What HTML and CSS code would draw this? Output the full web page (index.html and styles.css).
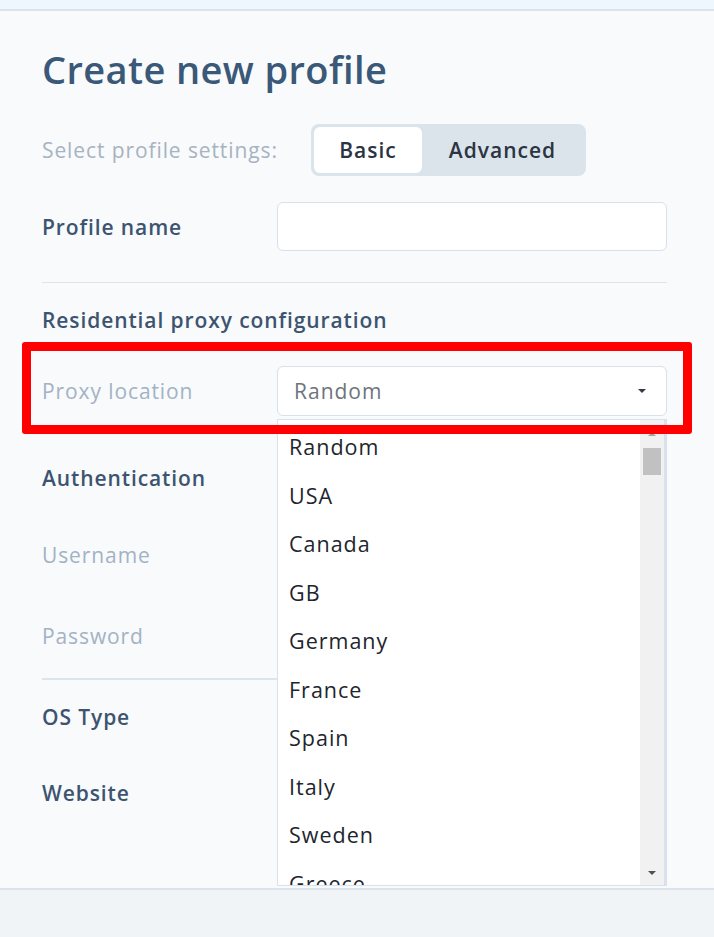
FILE: index.html
```html
<!DOCTYPE html>
<html lang="en">
<head>
<meta charset="utf-8">
<title>Create new profile</title>
<link rel="stylesheet" href="styles.css">
</head>
<body>
<div class="topbar"></div>
<main class="main">
  <h1 class="title">Create new profile</h1>

  <div class="row settings-row">
    <span class="label muted">Select profile settings:</span>
    <div class="toggle">
      <button class="seg active">Basic</button>
      <button class="seg">Advanced</button>
    </div>
  </div>

  <div class="row field-row name-row">
    <span class="label strong">Profile name</span>
    <div class="input"></div>
  </div>

  <hr class="divider">

  <h2 class="section">Residential proxy configuration</h2>

  <div class="row field-row proxy-row">
    <span class="highlight"></span>
    <span class="label muted">Proxy location</span>
    <div class="select">
      <span class="select-value">Random</span>
      <span class="caret"></span>
      <div class="dropdown">
        <ul class="options">
          <li>Random</li>
          <li>USA</li>
          <li>Canada</li>
          <li>GB</li>
          <li>Germany</li>
          <li>France</li>
          <li>Spain</li>
          <li>Italy</li>
          <li>Sweden</li>
          <li>Greece</li>
        </ul>
        <div class="scrollbar">
          <span class="arrow up"></span>
          <span class="thumb"></span>
          <span class="arrow down"></span>
        </div>
      </div>
    </div>
  </div>

  <h2 class="section auth">Authentication</h2>

  <div class="row field-row user-row">
    <span class="label muted">Username</span>
    <div class="input"></div>
  </div>
  <div class="row field-row pass-row">
    <span class="label muted">Password</span>
    <div class="input"></div>
  </div>

  <hr class="divider short">

  <div class="row field-row os-row">
    <span class="label strong">OS Type</span>
  </div>
  <div class="row field-row web-row">
    <span class="label strong">Website</span>
  </div>
</main>
<footer class="footer"></footer>
</body>
</html>
```

FILE: styles.css
```css
* { box-sizing: border-box; }

html, body {
  margin: 0;
  padding: 0;
  height: 100%;
}

body {
  font-family: "Open Sans", "Noto Sans", "Liberation Sans", sans-serif;
  background: #f8fafc;
  display: flex;
  flex-direction: column;
  overflow: hidden;
}

.topbar {
  height: 11px;
  flex: none;
  background: #eef7fd;
  border-bottom: 2px solid #d9e4ee;
}

.main {
  flex: none;
  height: 877px;
  overflow: hidden;
  padding: 0 47px 0 42px;
  background: #f8fafc;
  display: flex;
  flex-direction: column;
}

.footer {
  flex: 1;
  background: #f1f4f7;
  border-top: 2px solid #dbe3ec;
}

.title {
  margin: 36px 0 0;
  height: 44px;
  line-height: 44px;
  font-size: 38px;
  font-weight: 600;
  color: #3a5877;
  letter-spacing: 0.4px;
}

.row {
  display: flex;
  align-items: center;
}

.label {
  width: 235px;
  flex: none;
  font-size: 21px;
  line-height: 28px;
  letter-spacing: 0.9px;
  white-space: nowrap;
}

.label.strong {
  font-weight: 600;
  color: #3d5470;
}

.label.muted {
  color: #a3b2c4;
  font-weight: 400;
}

.settings-row {
  margin-top: 33px;
  height: 52px;
}

.settings-row .label {
  width: 269px;
  color: #a7b3c2;
}

.toggle {
  display: flex;
  height: 52px;
  padding: 3px;
  background: #dbe3eb;
  border-radius: 8px;
}

.seg {
  border: none;
  font-family: inherit;
  font-size: 21px;
  font-weight: 600;
  letter-spacing: 1px;
  color: #2b3442;
  background: transparent;
  border-radius: 6px;
  padding: 0;
  height: 46px;
}

.seg.active {
  background: #ffffff;
  width: 108px;
}

.seg:not(.active) {
  width: 161px;
}

.field-row {
  height: 50px;
}

.name-row {
  margin-top: 26px;
  height: 49px;
}

.input {
  flex: 1;
  height: 100%;
  background: #ffffff;
  border: 1px solid #d7e1eb;
  border-radius: 6px;
}

.divider {
  margin: 31px 0 0;
  border: none;
  border-top: 1px solid #dce5ee;
  height: 0;
}

.divider.short {
  margin-top: 17px;
  border-top-width: 2px;
}

.section {
  margin: 23px 0 0;
  height: 28px;
  line-height: 28px;
  font-size: 21px;
  letter-spacing: 0.9px;
  font-weight: 600;
  color: #3d5470;
}

.proxy-row {
  margin-top: 32px;
  position: relative;
}

.highlight {
  position: absolute;
  left: -20px;
  right: -25px;
  top: -24px;
  bottom: -18px;
  border: 9px solid #ff0000;
  border-radius: 3px;
  pointer-events: none;
  z-index: 3;
}

.select {
  position: relative;
  flex: 1;
  height: 100%;
  background: #ffffff;
  border: 1px solid #d7e1eb;
  border-radius: 6px;
  display: flex;
  align-items: center;
  padding: 0 20px 0 16px;
}

.select-value {
  flex: 1;
  font-size: 21px;
  letter-spacing: 1px;
  color: #6d747d;
}

.caret {
  width: 0;
  height: 0;
  border-left: 4px solid transparent;
  border-right: 4px solid transparent;
  border-top: 4px solid #333a44;
}

.dropdown {
  position: absolute;
  left: -1px;
  right: -1px;
  top: calc(100% + 4px);
  height: 467px;
  background: #ffffff;
  border: 1px solid #d9e2ec;
  border-right-width: 3px;
  overflow: hidden;
  z-index: 2;
  display: flex;
}

.options {
  flex: 1;
  list-style: none;
  margin: 0;
  padding: 3px 0 0;
}

.options li {
  height: 48.5px;
  line-height: 48.5px;
  padding-left: 11px;
  font-size: 21.5px;
  letter-spacing: 1px;
  color: #21252d;
}

.scrollbar {
  width: 24px;
  flex: none;
  background: #f1f1f1;
  position: relative;
}

.arrow {
  position: absolute;
  left: 8px;
  width: 0;
  height: 0;
  border-left: 4px solid transparent;
  border-right: 4px solid transparent;
}

.arrow.up {
  top: 12px;
  border-bottom: 4px solid #a3a3a3;
}

.arrow.down {
  bottom: 10px;
  border-top: 4px solid #505050;
}

.thumb {
  position: absolute;
  left: 3px;
  right: 3px;
  top: 28px;
  height: 27px;
  background: #c1c1c1;
}

.auth {
  margin-top: 48px;
}

.user-row {
  margin-top: 38px;
}

.pass-row {
  margin-top: 31px;
}

.os-row {
  margin-top: 12px;
}

.web-row {
  margin-top: 26px;
}
```
